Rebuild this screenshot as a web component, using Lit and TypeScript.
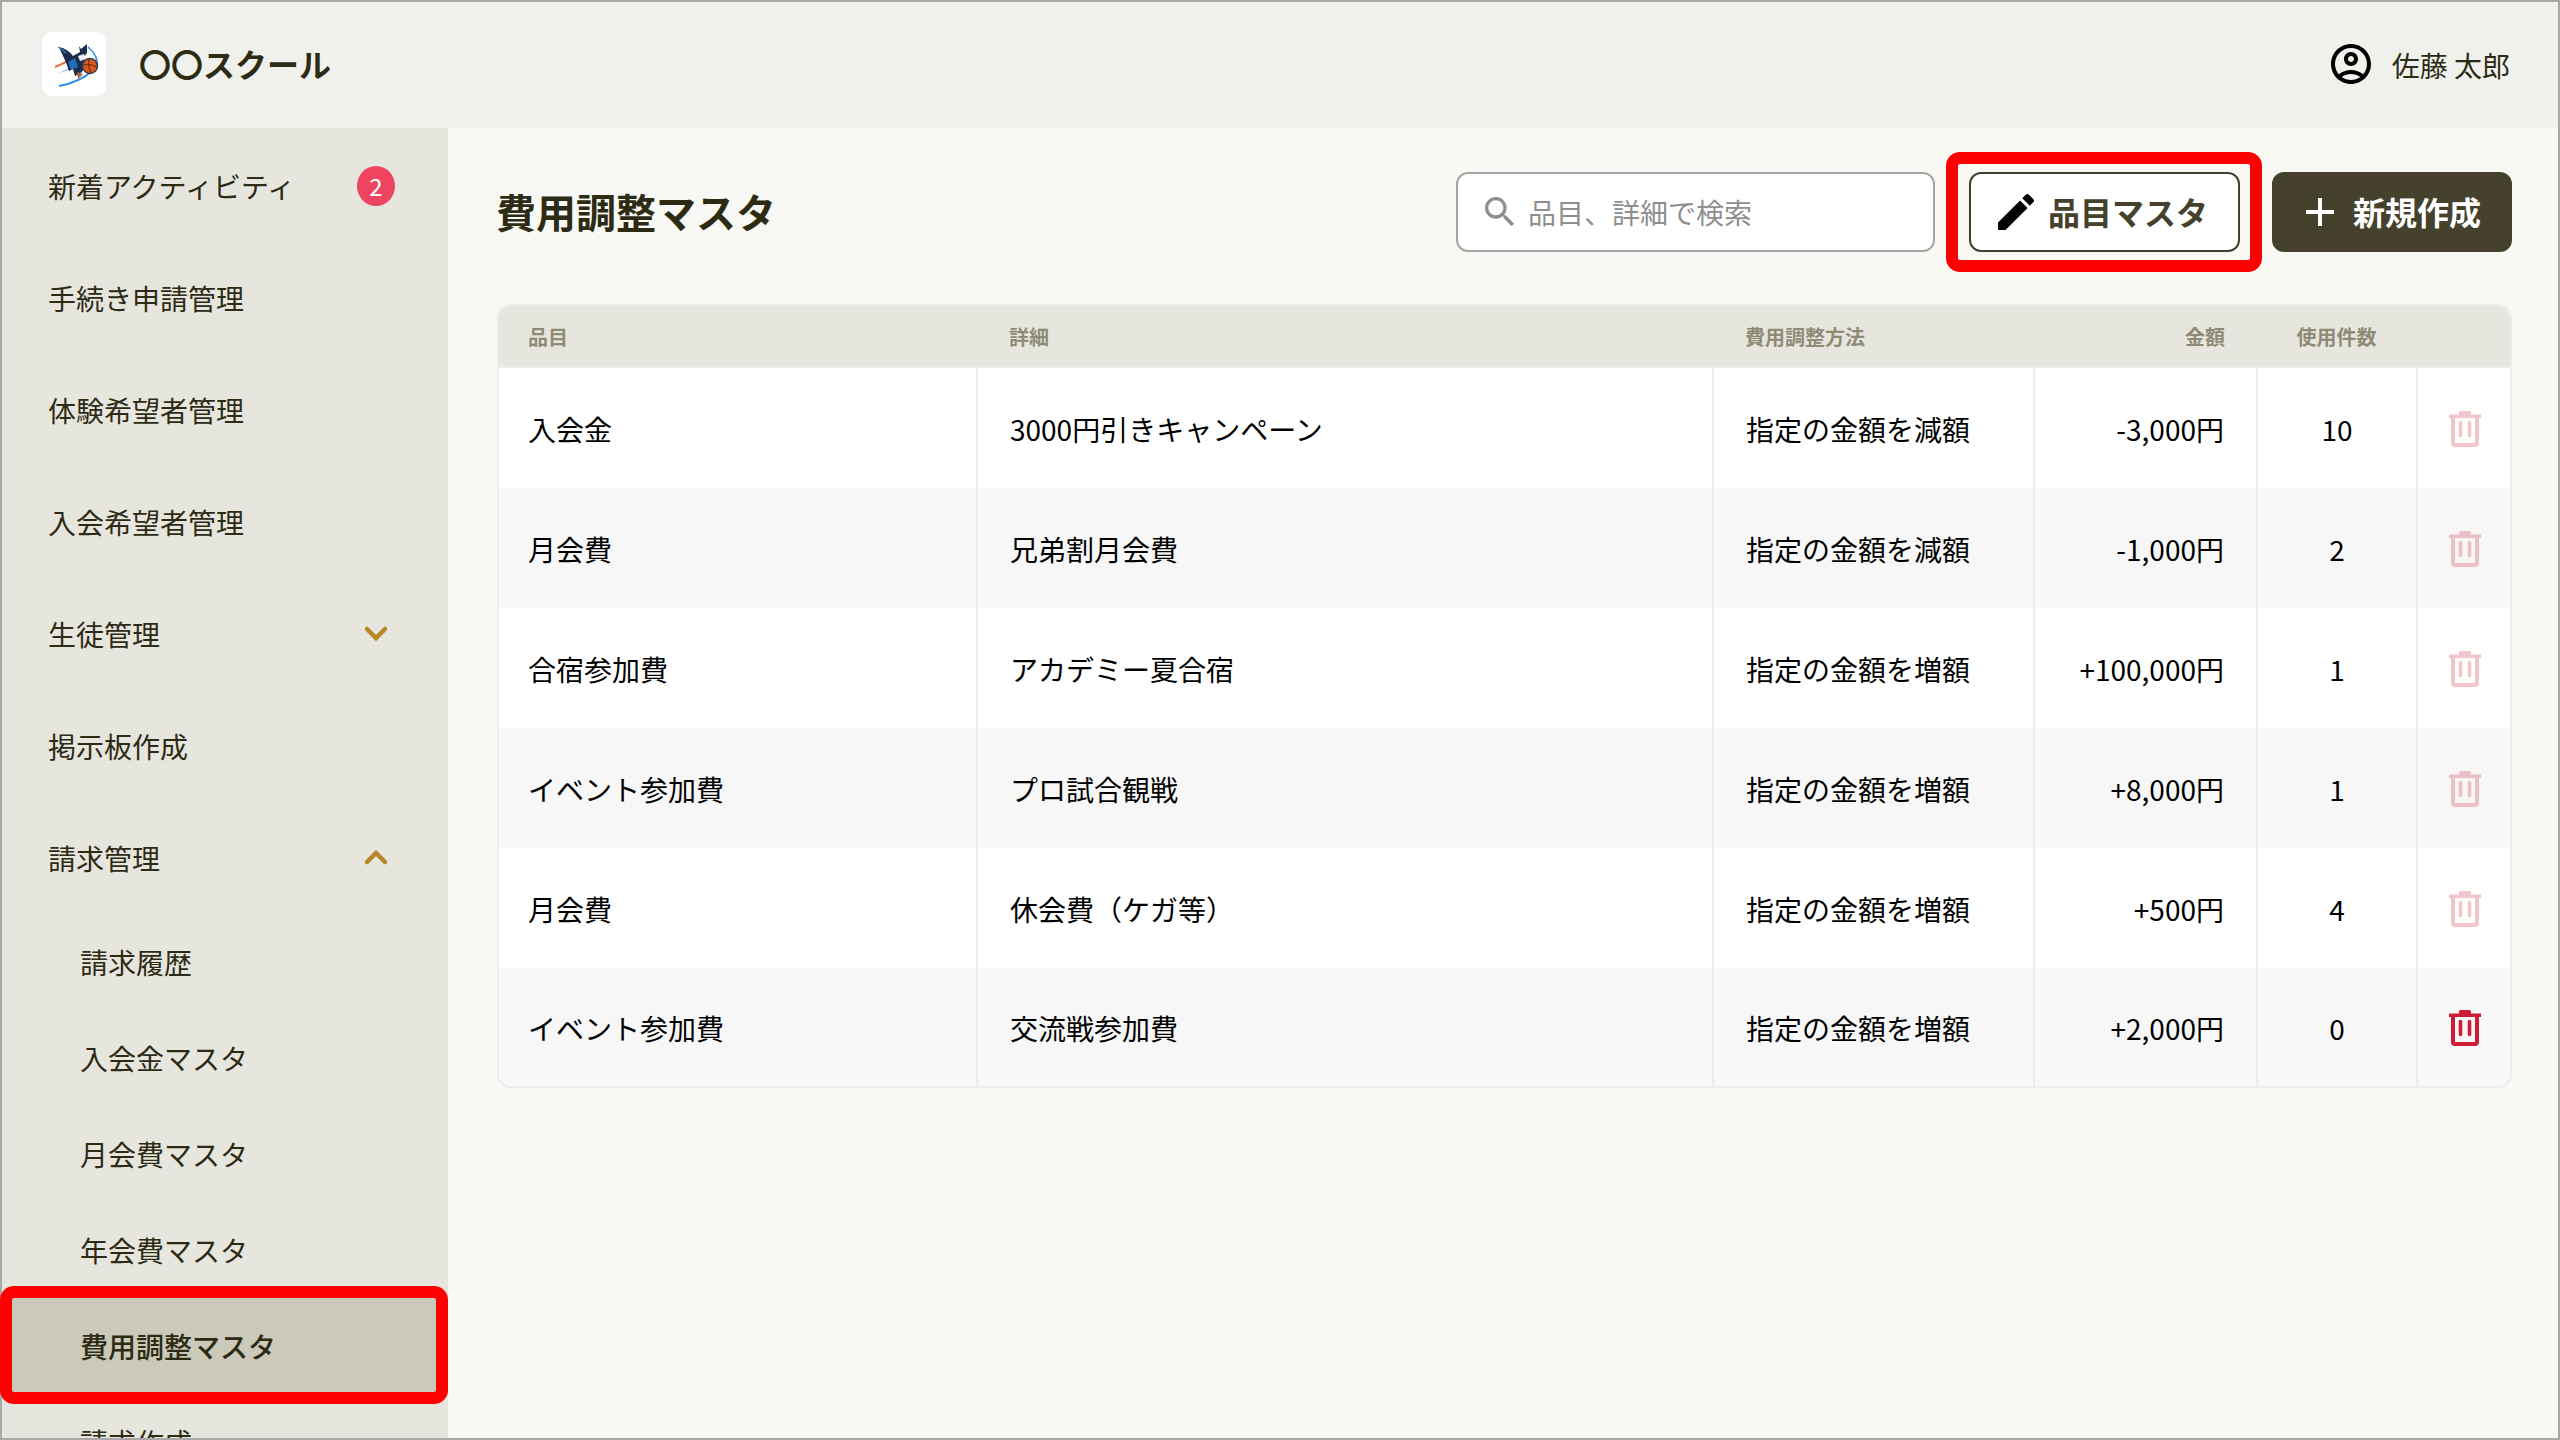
import { css, html, LitElement, svg } from 'lit';
import { customElement } from 'lit/decorators.js';
import { map } from 'lit/directives/map.js';

interface FeeRow {
  item: string;
  detail: string;
  method: string;
  amount: string;
  count: number;
}

const ROWS: FeeRow[] = [
  { item: '入会金', detail: '3000円引きキャンペーン', method: '指定の金額を減額', amount: '-3,000円', count: 10 },
  { item: '月会費', detail: '兄弟割月会費', method: '指定の金額を減額', amount: '-1,000円', count: 2 },
  { item: '合宿参加費', detail: 'アカデミー夏合宿', method: '指定の金額を増額', amount: '+100,000円', count: 1 },
  { item: 'イベント参加費', detail: 'プロ試合観戦', method: '指定の金額を増額', amount: '+8,000円', count: 1 },
  { item: '月会費', detail: '休会費（ケガ等）', method: '指定の金額を増額', amount: '+500円', count: 4 },
  { item: 'イベント参加費', detail: '交流戦参加費', method: '指定の金額を増額', amount: '+2,000円', count: 0 },
];

const SUB_ITEMS = ['請求履歴', '入会金マスタ', '月会費マスタ', '年会費マスタ', '費用調整マスタ', '請求作成'];
const ACTIVE_SUB = '費用調整マスタ';

const logo = svg`
  <svg width="64" height="64" viewBox="0 0 64 64">
    <path d="M13 34 Q22 31 30 25 L30 27 Q22 33 13 36Z" fill="#e8622c" />
    <path d="M17 41 Q27 37 33 31 L34 33 Q26 39 17 41Z" fill="#2f7fd0" opacity=".7" />
    <path d="M17 15 Q26 17 31 24 L38 20 L37 14 L39 17 L45 12 L45 21 L41 26 L45 29 L40 40 L33 44 L31 37 L27 39 Q24 30 22 26 Q19 20 17 15Z" fill="#1d2c4c" />
    <path d="M26 30 L33 26 L36 35 L29 38Z" fill="#1f6fb8" />
    <path d="M36 24 L42 22 L44 27 L38 29Z" fill="#f1f1f1" />
    <path d="M16 15 Q20 17 24 21" stroke="#2f7fd0" stroke-width="1.2" fill="none" />
    <path d="M46 15 Q57 24 55 36" stroke="#2f8ce0" stroke-width="1.6" fill="none" />
    <path d="M17 54 Q38 50 50 39" stroke="#2f8ce0" stroke-width="2" fill="none" />
    <circle cx="48" cy="34" r="7.5" fill="#d9581c" stroke="#3a3f52" stroke-width="1.5" />
    <path d="M41 33 Q48 31 55 35 M47 27 Q45 34 49 41" stroke="#5c2a10" stroke-width="1" fill="none" />
    <path d="M35 40 L41 42 L36 47Z" fill="#a8643a" />
  </svg>
`;

const trash = svg`
  <svg width="32" height="36" viewBox="0 0 32 36">
    <path d="M0 3.5h32v3.5H0z M10 1.5q0-1.5 1.5-1.5h9q1.500 0 1.500 1.500v2H10z" fill="currentColor" />
    <path d="M4 5v27q0 2 2 2h20q2 0 2-2V5" fill="none" stroke="currentColor" stroke-width="4" />
    <path d="M11.500 11.500v13 M20.500 11.500v13" stroke="currentColor" stroke-width="3.600" stroke-linecap="round" />
  </svg>
`;

@customElement('app-root')
export class AppRoot extends LitElement {
  static override styles = css`
    :host {
      display: block;
      position: relative;
      width: 2560px;
      height: 1440px;
      overflow: hidden;
      font-family: 'Noto Sans CJK JP', 'Noto Sans', sans-serif;
      color: #2d2b14;
      background: #f8f9f5;
    }
    :host::before {
      content: '';
      position: absolute;
      inset: 0;
      border: 2px solid #a8a8a8;
      z-index: 1;
      pointer-events: none;
    }
    .topbar {
      height: 128px;
      box-sizing: border-box;
      padding: 0 50px 0 42px;
      display: flex;
      align-items: center;
      background: #f0f1ec;
    }
    .logo {
      width: 64px;
      height: 64px;
      border-radius: 10px;
      background: #fff;
      margin-right: 33px;
    }
    .logo svg {
      display: block;
      filter: blur(0.4px);
    }
    .brand {
      font-size: 32px;
      font-weight: 700;
      flex: 1;
      margin-bottom: 3px;
    }
    .user {
      display: flex;
      align-items: center;
      gap: 17px;
      font-size: 28px;
      margin-top: 2px;
    }
    .user svg {
      display: block;
      margin-top: -2px;
    }
    .body {
      display: flex;
      height: 1312px;
    }
    .sidebar {
      width: 448px;
      flex: none;
      box-sizing: border-box;
      padding-top: 2px;
      background: #e6e6df;
      overflow: hidden;
    }
    .nav {
      height: 112px;
      box-sizing: border-box;
      padding: 0 56px 0 48px;
      display: flex;
      align-items: center;
      justify-content: space-between;
      font-size: 28px;
    }
    .nav.first {
      padding-right: 53px;
    }
    .nav svg {
      display: block;
      margin-top: -3px;
    }
    .badge {
      width: 38px;
      height: 40px;
      border-radius: 50%;
      background: #ee4460;
      color: #fff;
      font-size: 24px;
      line-height: 40px;
      text-align: center;
    }
    .sub {
      position: relative;
      height: 96px;
      box-sizing: border-box;
      padding-left: 80px;
      display: flex;
      align-items: center;
      font-size: 28px;
    }
    .sub.active {
      background: #cbc9b9;
      font-weight: 500;
    }
    .marker {
      position: absolute;
      left: 0;
      right: 0;
      top: -12px;
      bottom: -10px;
      border: 12px solid #f00;
      border-radius: 14px;
      z-index: 2;
    }
    .main {
      flex: 1;
      box-sizing: border-box;
      padding: 44px 48px 0 49px;
    }
    .toolbar {
      display: flex;
      align-items: center;
      height: 80px;
    }
    h1 {
      flex: 1;
      margin: 0 0 3px -1px;
      font-size: 40px;
      font-weight: 700;
    }
    .search {
      width: 479px;
      height: 80px;
      box-sizing: border-box;
      display: flex;
      align-items: center;
      gap: 8px;
      padding-left: 22px;
      border: 2px solid #a5a5a5;
      border-radius: 12px;
      background: #fff;
      margin-right: 34px;
    }
    .search svg {
      flex: none;
    }
    .search input {
      flex: 1;
      min-width: 0;
      border: none;
      outline: none;
      padding: 0;
      background: none;
      font: inherit;
      font-size: 28px;
    }
    .search input::placeholder {
      color: #8e8e8e;
      opacity: 1;
    }
    .btn-wrap {
      position: relative;
      margin-right: 32px;
    }
    .btn-wrap .marker {
      left: -23px;
      right: -22px;
      top: -20px;
      bottom: -20px;
    }
    .btn {
      height: 80px;
      box-sizing: border-box;
      display: flex;
      align-items: center;
      font: inherit;
      font-size: 32px;
      font-weight: 700;
      border-radius: 12px;
      border: 2px solid #45412d;
    }
    .btn span {
      margin-bottom: 3px;
    }
    .btn.outline {
      width: 271px;
      padding: 0 0 0 21px;
      gap: 8px;
      background: #fff;
      color: #45412d;
    }
    .btn.solid {
      width: 240px;
      padding: 0 0 0 22px;
      gap: 9px;
      background: #45412d;
      color: #fff;
    }
    .table {
      margin-top: 52px;
      border: 2px solid #ececec;
      border-radius: 14px;
      overflow: hidden;
      background: #fff;
    }
    .row {
      display: grid;
      grid-template-columns: 479px 736px 321px 223px 160px 1fr;
      height: 120px;
      font-size: 28px;
      color: #000;
    }
    .row:nth-child(odd) {
      background: #f7f7f7;
    }
    .row:last-child {
      height: 118px;
    }
    .row.head {
      height: 60px;
      background: #e6e6df;
      border-bottom: 2px solid #ececec;
      box-sizing: content-box;
      font-size: 20px;
      font-weight: 700;
      color: #8f8a75;
    }
    .cell {
      display: flex;
      align-items: center;
      box-sizing: border-box;
      padding: 2px 30px 0 32px;
      border-right: 2px solid #ececec;
    }
    .cell:first-child {
      padding-left: 29px;
    }
    .head .cell {
      padding: 0 30px 0 31px;
      border-right: none;
    }
    .head .cell:first-child {
      padding-left: 29px;
    }
    .cell.last {
      border-right: none;
    }
    .cell.end {
      justify-content: flex-end;
      padding-right: 32px;
    }
    .head .cell.end {
      padding-right: 33px;
    }
    .cell.mid {
      justify-content: center;
      padding: 2px 0 0;
    }
    .head .cell.mid {
      padding: 0 3px 0 0;
    }
    .trash {
      color: #cd1d38;
      opacity: 0.25;
      display: flex;
      margin-left: 2px;
    }
    .trash.on {
      opacity: 1;
    }
  `;

  override render() {
    return html`
      <header class="topbar">
        <div class="logo">${logo}</div>
        <div class="brand">〇〇スクール</div>
        <div class="user">
          <svg width="48" height="48" viewBox="0 0 24 24" fill="#000">
            <path
              d="M12 2C6.480 2 2 6.480 2 12s4.480 10 10 10 10-4.480 10-10S17.520 2 12 2zM7.350 18.500C8.660 17.560 10.260 17 12 17s3.340.56 4.650 1.500c-1.310.94-2.910 1.500-4.650 1.500s-3.340-.56-4.650-1.500zm10.790-1.380C16.450 15.800 14.320 15 12 15s-4.450.8-6.140 2.120C4.700 15.730 4 13.950 4 12c0-4.420 3.580-8 8-8s8 3.580 8 8c0 1.950-.7 3.730-1.860 5.120zM12 6c-1.930 0-3.500 1.570-3.500 3.500S10.070 13 12 13s3.500-1.570 3.500-3.500S13.930 6 12 6zm0 5c-.83 0-1.500-.67-1.500-1.500S11.170 8 12 8s1.500.67 1.500 1.500S12.830 11 12 11z"
            />
          </svg>
          <span>佐藤 太郎</span>
        </div>
      </header>
      <div class="body">
        <nav class="sidebar">
          <div class="nav first"><span>新着アクティビティ</span><span class="badge">2</span></div>
          <div class="nav">手続き申請管理</div>
          <div class="nav">体験希望者管理</div>
          <div class="nav">入会希望者管理</div>
          <div class="nav"><span>生徒管理</span>${this.renderChevron(false)}</div>
          <div class="nav">掲示板作成</div>
          <div class="nav"><span>請求管理</span>${this.renderChevron(true)}</div>
          ${map(
            SUB_ITEMS,
            (label) => html`
              <div class="sub ${label === ACTIVE_SUB ? 'active' : ''}">
                ${label} ${label === ACTIVE_SUB ? html`<div class="marker"></div>` : ''}
              </div>
            `
          )}
        </nav>
        <main class="main">
          <div class="toolbar">
            <h1>費用調整マスタ</h1>
            <label class="search">
              <svg width="40" height="40" viewBox="0 0 24 24" fill="#8e8e8e">
                <path
                  d="M15.500 14h-.79l-.28-.27A6.470 6.470 0 0 0 16 9.500 6.500 6.500 0 1 0 9.500 16c1.610 0 3.090-.59 4.230-1.570l.27.28v.79l5 4.990L20.490 19l-4.990-5zm-6 0C7.010 14 5 11.990 5 9.500S7.010 5 9.500 5 14 7.010 14 9.500 11.990 14 9.500 14z"
                />
              </svg>
              <input placeholder="品目、詳細で検索" />
            </label>
            <div class="btn-wrap">
              <button class="btn outline">
                <svg width="48" height="48" viewBox="0 0 24 24" fill="#000">
                  <path
                    d="M3 17.250V21h3.750L17.810 9.940l-3.750-3.750L3 17.250zM20.710 7.040c.39-.39.39-1.020 0-1.410l-2.340-2.340c-.39-.39-1.020-.39-1.410 0l-1.830 1.830 3.750 3.750 1.830-1.830z"
                  />
                </svg>
                <span>品目マスタ</span>
              </button>
              <div class="marker"></div>
            </div>
            <button class="btn solid">
              <svg width="48" height="48" viewBox="0 0 24 24" fill="#fff">
                <path d="M19 13h-6v6h-2v-6H5v-2h6V5h2v6h6v2z" />
              </svg>
              <span>新規作成</span>
            </button>
          </div>
          <div class="table">
            <div class="row head">
              <div class="cell">品目</div>
              <div class="cell">詳細</div>
              <div class="cell">費用調整方法</div>
              <div class="cell end">金額</div>
              <div class="cell mid">使用件数</div>
              <div class="cell last"></div>
            </div>
            ${map(
              ROWS,
              (row) => html`
                <div class="row">
                  <div class="cell">${row.item}</div>
                  <div class="cell">${row.detail}</div>
                  <div class="cell">${row.method}</div>
                  <div class="cell end">${row.amount}</div>
                  <div class="cell mid">${row.count}</div>
                  <div class="cell mid last">
                    <span class="trash ${row.count === 0 ? 'on' : ''}">${trash}</span>
                  </div>
                </div>
              `
            )}
          </div>
        </main>
      </div>
    `;
  }

  private renderChevron(open: boolean) {
    return html`
      <svg width="32" height="32" viewBox="0 0 32 32" fill="none" stroke="#b5892a" stroke-width="4.500" stroke-linecap="round" stroke-linejoin="miter">
        <path d=${open ? 'M7 21L16 12L25 21' : 'M7 12L16 21L25 12'} />
      </svg>
    `;
  }
}

declare global {
  interface HTMLElementTagNameMap {
    'app-root': AppRoot;
  }
}
